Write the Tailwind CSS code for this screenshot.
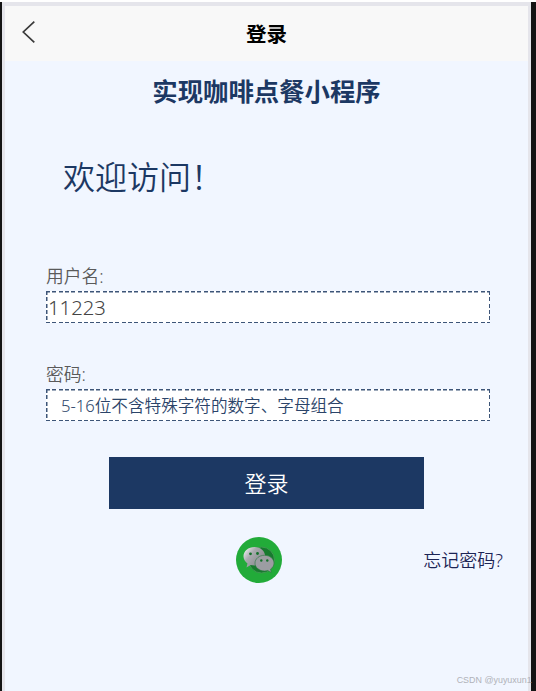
<!DOCTYPE html>
<html lang="zh-CN">
<head>
    <meta charset="UTF-8">
    <meta name="viewport" content="width=device-width, initial-scale=1.0">
    <title>登录</title>
    <script src="https://cdn.jsdelivr.net/npm/@tailwindcss/browser@4"></script>
    <style>
        body {
            font-family: 'Noto Sans', 'Noto Sans CJK SC', sans-serif;
        }
        /* wider dashes than border-style: dashed gives */
        .dashed {
            --h: repeating-linear-gradient(90deg, #3d5578 0 4px, transparent 4px 6.3px);
            --v: repeating-linear-gradient(180deg, #3d5578 0 4px, transparent 4px 6.3px);
            background: var(--h) 0 0 / 100% 1.5px no-repeat,
                var(--h) 0 100% / 100% 1.5px no-repeat,
                var(--v) 0 0 / 1.5px 100% no-repeat,
                var(--v) 100% 0 / 1.5px 100% no-repeat,
                #fff;
        }
    </style>
</head>
<body class="bg-[#f1f6ff]">
    <div class="h-[691px] w-[536px] overflow-hidden border-t-2 border-white bg-[#141414] pr-[5px] pl-[2px]">
        <div class="relative flex h-full flex-col border-x-[3px] border-t-4 border-[#e5e5eb] bg-[#f1f6ff]">
            <!-- Navigation bar -->
            <header class="flex h-[55px] shrink-0 items-center bg-[#f8f8f8]">
                <button class="flex w-20 pb-1 pl-4">
                    <svg class="h-6 w-4" viewBox="0 0 16 24" fill="none" stroke="#3a3a3a" stroke-width="1.7">
                        <path d="M13.3 1.7 2.3 12l11 10.3" />
                    </svg>
                </button>
                <h1 class="flex-1 pt-px text-center text-[20.5px] leading-7 font-bold text-black">登录</h1>
                <div class="w-20"></div>
            </header>

            <h2 class="mt-3 text-center text-[25.4px] leading-9 font-bold text-[#1c3863]">实现咖啡点餐小程序</h2>
            <p class="mt-[46px] h-[44px] pl-[58px] text-[32px] leading-[44px] font-[350] text-[#1c3863]">欢迎访问！</p>

            <!-- Login form -->
            <form class="mt-[62px] pl-[41px]">
                <label class="block h-[30px] text-[17.8px] leading-[30px] font-[350] text-[#5a5a5a]">用户名:</label>
                <input type="text" value="11223" class="dashed block h-8 w-[444px] pl-[2px] text-[20.3px] font-[350] text-[#444]">
                <label class="mt-9 block h-[30px] text-[17.8px] leading-[30px] font-[350] text-[#5a5a5a]">密码:</label>
                <input type="text" placeholder="5-16位不含特殊字符的数字、字母组合" class="dashed block h-8 w-[444px] pl-[15px] text-[16.6px] font-[350] placeholder:text-[#2b4469]">
                <button type="button" class="mt-9 ml-[63px] block h-[52px] w-[315px] bg-[#1c3863] text-[22px] font-[350] text-white">登录</button>
            </form>

            <div class="mt-7 flex h-[46px] items-center justify-between pr-[25px] pl-[231px]">
                <svg class="size-[46px]" viewBox="0 0 46 46">
                    <defs>
                        <linearGradient id="bubble" x1="0" y1="0" x2="0.8" y2="0.6">
                            <stop offset="0" stop-color="#fff" />
                            <stop offset="0.5" stop-color="#a9aaae" />
                            <stop offset="1" stop-color="#8f9095" />
                        </linearGradient>
                    </defs>
                    <circle cx="23" cy="23" r="23" fill="#22ab39" />
                    <circle cx="25.5" cy="23" r="13" fill="#177a2e" stroke="#3f9a50" stroke-width="1" />
                    <path d="M18.500 10c-6.200 0-11 4.200-11 9.300 0 2.900 1.500 5.500 4 7.200l-1 3.900 4.200-2.300c1.200.3 2.500.5 3.800.5 6 0 10.700-4.200 10.700-9.300s-4.700-9.300-10.700-9.300z" fill="url(#bubble)" />
                    <path d="M28.500 18.300c-5.300 0-9.500 3.500-9.500 7.800s4.200 7.900 9.500 7.900c1.200 0 2.300-.2 3.300-.5l3.500 2-.8-3.300c2.100-1.400 3.500-3.600 3.500-6.100 0-4.300-4.200-7.800-9.500-7.800z" fill="#9c9da2" stroke="#2a7a40" stroke-width="0.6" />
                    <g fill="#14702a">
                        <circle cx="14.500" cy="16.800" r="1.400" />
                        <circle cx="21.500" cy="16.500" r="1.400" />
                        <circle cx="25.300" cy="23.500" r="1.200" />
                        <circle cx="31.300" cy="23.500" r="1.200" />
                    </g>
                </svg>
                <a href="#" class="text-[18px] font-[350] text-[#1c2455]">忘记密码?</a>
            </div>

            <!-- Watermark -->
            <span class="absolute right-[-4px] bottom-[3px] origin-right scale-x-[0.93] font-['Liberation_Sans'] text-[9.6px] leading-4 whitespace-nowrap text-[#b0b2b8]">CSDN @yuyuxun1</span>
        </div>
    </div>
</body>
</html>
